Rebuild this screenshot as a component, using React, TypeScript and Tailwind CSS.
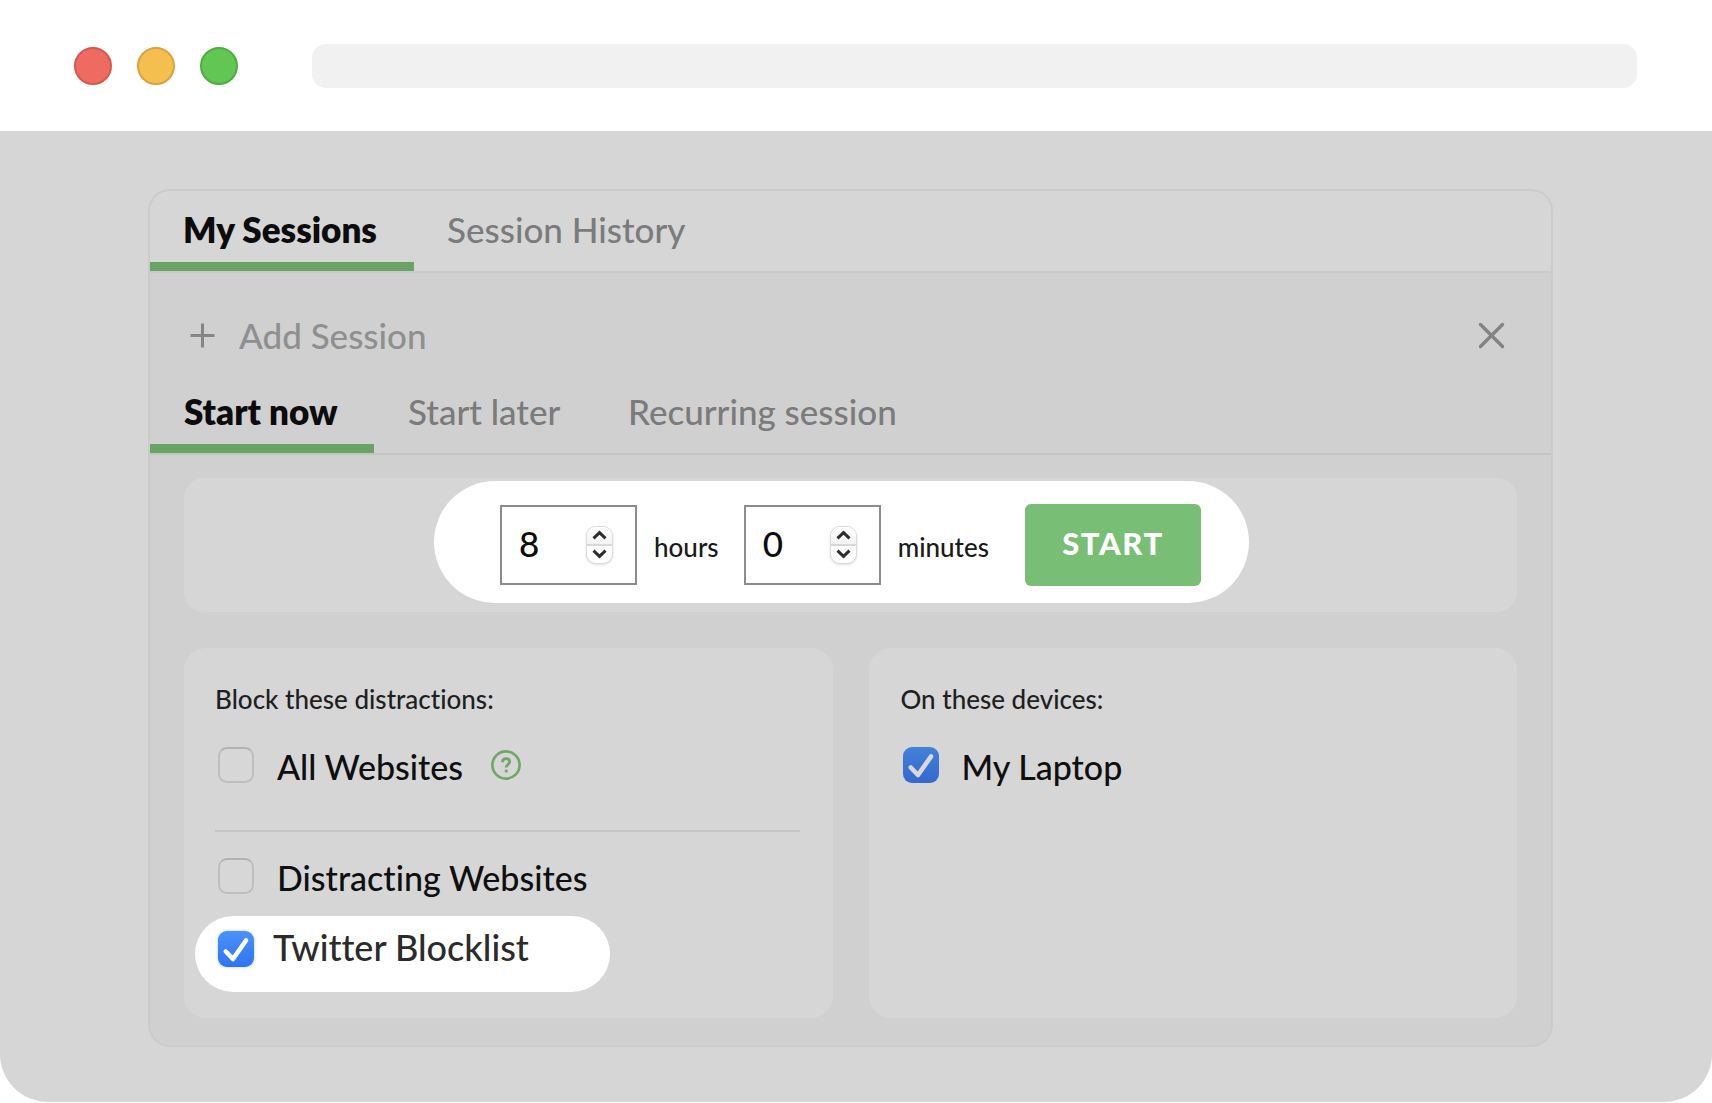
import { useState } from 'react';
import type { ReactNode } from 'react';

function Tab({ active, className, children }: { active?: boolean; className: string; children: ReactNode }) {
  return (
    <button
      type="button"
      role="tab"
      aria-selected={!!active}
      className={`border-b-[9px] text-left text-[35px] leading-10 whitespace-nowrap ${
        active ? 'border-[#69a366] font-extrabold text-[#0c0c0c]' : 'border-transparent font-medium text-[#7b7b7b]'
      } ${className}`}
    >
      {children}
    </button>
  );
}

function NumberField({ id, label, initial, max }: { id: string; label: string; initial: number; max: number }) {
  const [value, setValue] = useState(initial);
  const step = (by: number) => setValue((v) => Math.min(max, Math.max(0, v + by)));
  return (
    <div className="flex items-center gap-[17px]">
      <div className="flex h-20 w-[137px] items-center border-2 border-[#8c8c8c] bg-white pr-[22px] pl-[17px]">
        <input
          id={id}
          type="number"
          min={0}
          max={max}
          value={value}
          onChange={(e) => setValue(Number(e.target.value))}
          className="w-0 grow appearance-none bg-transparent pb-1 text-[35px] leading-10 font-medium text-[#0c0c0c] outline-none [-moz-appearance:textfield] [&::-webkit-inner-spin-button]:appearance-none"
        />
        <div className="flex h-[38px] w-[27px] flex-col overflow-hidden rounded-[10px] border border-[#dcdcdc] bg-white shadow-sm">
          <button type="button" aria-label={`More ${label}`} onClick={() => step(1)} className="flex grow items-center justify-center border-b-2 border-[#d8d8d8] bg-linear-to-b from-white to-[#f3f3f3]">
            <svg width="15" height="10" viewBox="0 0 15 10" fill="none" stroke="#2d2d2d" strokeWidth="3">
              <path d="M1.5 8.4 7.5 2.6 13.5 8.4" />
            </svg>
          </button>
          <button type="button" aria-label={`Fewer ${label}`} onClick={() => step(-1)} className="flex grow items-center justify-center">
            <svg width="15" height="10" viewBox="0 0 15 10" fill="none" stroke="#2d2d2d" strokeWidth="3">
              <path d="M1.5 1.6 7.5 7.4 13.5 1.6" />
            </svg>
          </button>
        </div>
      </div>
      <label htmlFor={id} className="pt-1 text-[26px] leading-8 font-medium text-[#1a1a1a]">
        {label}
      </label>
    </div>
  );
}

function CheckRow({ id, label, checked, bright }: { id: string; label: string; checked?: boolean; bright?: boolean }) {
  return (
    <div className={`flex h-10 items-center ${bright ? 'gap-[19px]' : 'gap-[23px]'}`}>
      <span className="grid">
        <input
          id={id}
          type="checkbox"
          defaultChecked={checked}
          className={`peer col-start-1 row-start-1 size-9 appearance-none rounded-[9px] border-2 border-[#bebebe] border-t-[#b2b2b2] bg-[#d7d7d7] checked:border-0 checked:bg-linear-to-b ${
            bright
              ? 'checked:from-[#4a92f8] checked:to-[#2f73f5] checked:shadow-[0_0_3px_#4a92f880]'
              : 'checked:from-[#4580d8] checked:to-[#3468d0]'
          }`}
        />
        <svg
          viewBox="0 0 36 36"
          fill="none"
          stroke={bright ? '#ffffff' : '#d9d9d9'}
          strokeWidth="4.6"
          strokeLinecap="round"
          strokeLinejoin="round"
          className="pointer-events-none col-start-1 row-start-1 size-9 opacity-0 peer-checked:opacity-100"
        >
          <path d="M7.8 20.5 15 28 28 9.5" />
        </svg>
      </span>
      <label
        htmlFor={id}
        className={`font-medium whitespace-nowrap ${bright ? 'pb-1 text-[36px] leading-10 text-[#2b2b2b]' : 'pt-1 text-[34px] leading-10 text-[#0f0f0f]'}`}
      >
        {label}
      </label>
    </div>
  );
}

export default function App() {
  return (
    <div className="bg-white font-['Lato',sans-serif] [font-variant-ligatures:none]">
      <header className="flex h-[131px] items-center pr-[75px] pl-[74px]">
        <div className="flex gap-[25px]">
          <span className="size-[38px] rounded-full border-2 border-[#d9564c] bg-[#ed6b60]" />
          <span className="size-[38px] rounded-full border-2 border-[#dba13c] bg-[#f5bf4f]" />
          <span className="size-[38px] rounded-full border-2 border-[#4fac3e] bg-[#62c655]" />
        </div>
        <input type="text" aria-label="Address" className="ml-[74px] h-11 min-w-0 grow rounded-[14px] bg-[#f1f1f1] px-4 outline-none" />
      </header>

      <main className="rounded-b-[48px] bg-[#d6d6d6] pt-[58px] pr-[159px] pb-[55px] pl-[148px]">
        <section className="overflow-hidden rounded-[22px] border-2 border-[#cbcbcb] bg-[#d0d0d0]">
          <div role="tablist" className="flex h-[82px] border-b-2 border-[#cacaca] bg-[#d6d6d6]">
            <Tab active className="w-[264px] pt-1 pl-[33px]">My Sessions</Tab>
            <Tab className="pt-1 pl-[33px]">Session History</Tab>
          </div>

          <div className="flex h-[104px] items-center justify-between pt-5 pr-[46px] pl-10">
            <button type="button" className="flex items-center gap-6 text-[35px] leading-10 font-medium text-[#8f8f8f]">
              <svg width="25" height="25" viewBox="0 0 25 25" stroke="#858585" strokeWidth="3">
                <path d="M12.5 0.5v24M0.5 12.5h24" />
              </svg>
              Add Session
            </button>
            <button type="button" aria-label="Close">
              <svg width="27" height="27" viewBox="0 0 27 27" stroke="#838383" strokeWidth="3.4" strokeLinecap="round">
                <path d="M2.5 2.5 24.5 24.5M24.5 2.5 2.5 24.5" />
              </svg>
            </button>
          </div>

          <div role="tablist" className="flex h-[78px] border-b-2 border-[#c4c4c4]">
            <Tab active className="w-[224px] pl-[34px]">Start now</Tab>
            <Tab className="w-[220px] pl-[34px]">Start later</Tab>
            <Tab className="pl-[34px]">Recurring session</Tab>
          </div>

          <div className="px-[34px] pt-[23px] pb-[27px]">
            <form onSubmit={(e) => e.preventDefault()} className="flex h-[134px] items-start justify-center rounded-[20px] bg-[#d6d6d6] pt-[3px] pr-[18px]">
              <div className="flex h-[122px] items-center rounded-full bg-white pt-[5px] pr-12 pl-[66px]">
                <div className="flex gap-[25px]">
                  <NumberField id="hours" label="hours" initial={8} max={24} />
                  <NumberField id="minutes" label="minutes" initial={0} max={59} />
                </div>
                <button type="submit" className="ml-9 h-[82px] w-44 rounded-[6px] bg-[#78be74] pb-0.5 text-[31px] font-black tracking-wider text-white">
                  START
                </button>
              </div>
            </form>

            <div className="mt-9 grid grid-cols-2 gap-9">
              <fieldset className="rounded-[22px] bg-[#d6d6d6] pt-[35px] pr-[33px] pb-[26px] pl-[31px]">
                <p className="text-[26px] leading-8 font-medium text-[#1f1f1f]">Block these distractions:</p>
                <div className="mt-[30px] ml-[3px] flex items-center gap-7">
                  <CheckRow id="all-websites" label="All Websites" />
                  <button type="button" aria-label="Help">
                    <svg width="30" height="30" viewBox="0 0 30 30" fill="none" stroke="#6fa766" strokeWidth="2.6">
                      <circle cx="15" cy="15" r="13.6" />
                      <path d="M11.5 12.2c0-2.1 1.5-3.5 3.6-3.5s3.5 1.3 3.5 3.1c0 2.6-3.4 2.8-3.4 5.6" strokeWidth="2.8" />
                      <path d="M15.2 19.6v2.8" strokeWidth="2.8" />
                    </svg>
                  </button>
                </div>
                <hr className="mt-[45px] border-t-2 border-[#c5c5c5]" />
                <div className="mt-6 ml-[3px]">
                  <CheckRow id="distracting" label="Distracting Websites" />
                </div>
                <div className="mt-5 -ml-5 h-[76px] w-[415px] rounded-full bg-white pt-[13px] pl-[23px]">
                  <CheckRow id="twitter" label="Twitter Blocklist" checked bright />
                </div>
              </fieldset>
              <fieldset className="rounded-[22px] bg-[#d6d6d6] px-8 pt-[35px]">
                <p className="text-[26px] leading-8 font-medium text-[#1f1f1f]">On these devices:</p>
                <div className="mt-[30px] ml-[2px]">
                  <CheckRow id="laptop" label="My Laptop" checked />
                </div>
              </fieldset>
            </div>
          </div>
        </section>
      </main>
    </div>
  );
}
